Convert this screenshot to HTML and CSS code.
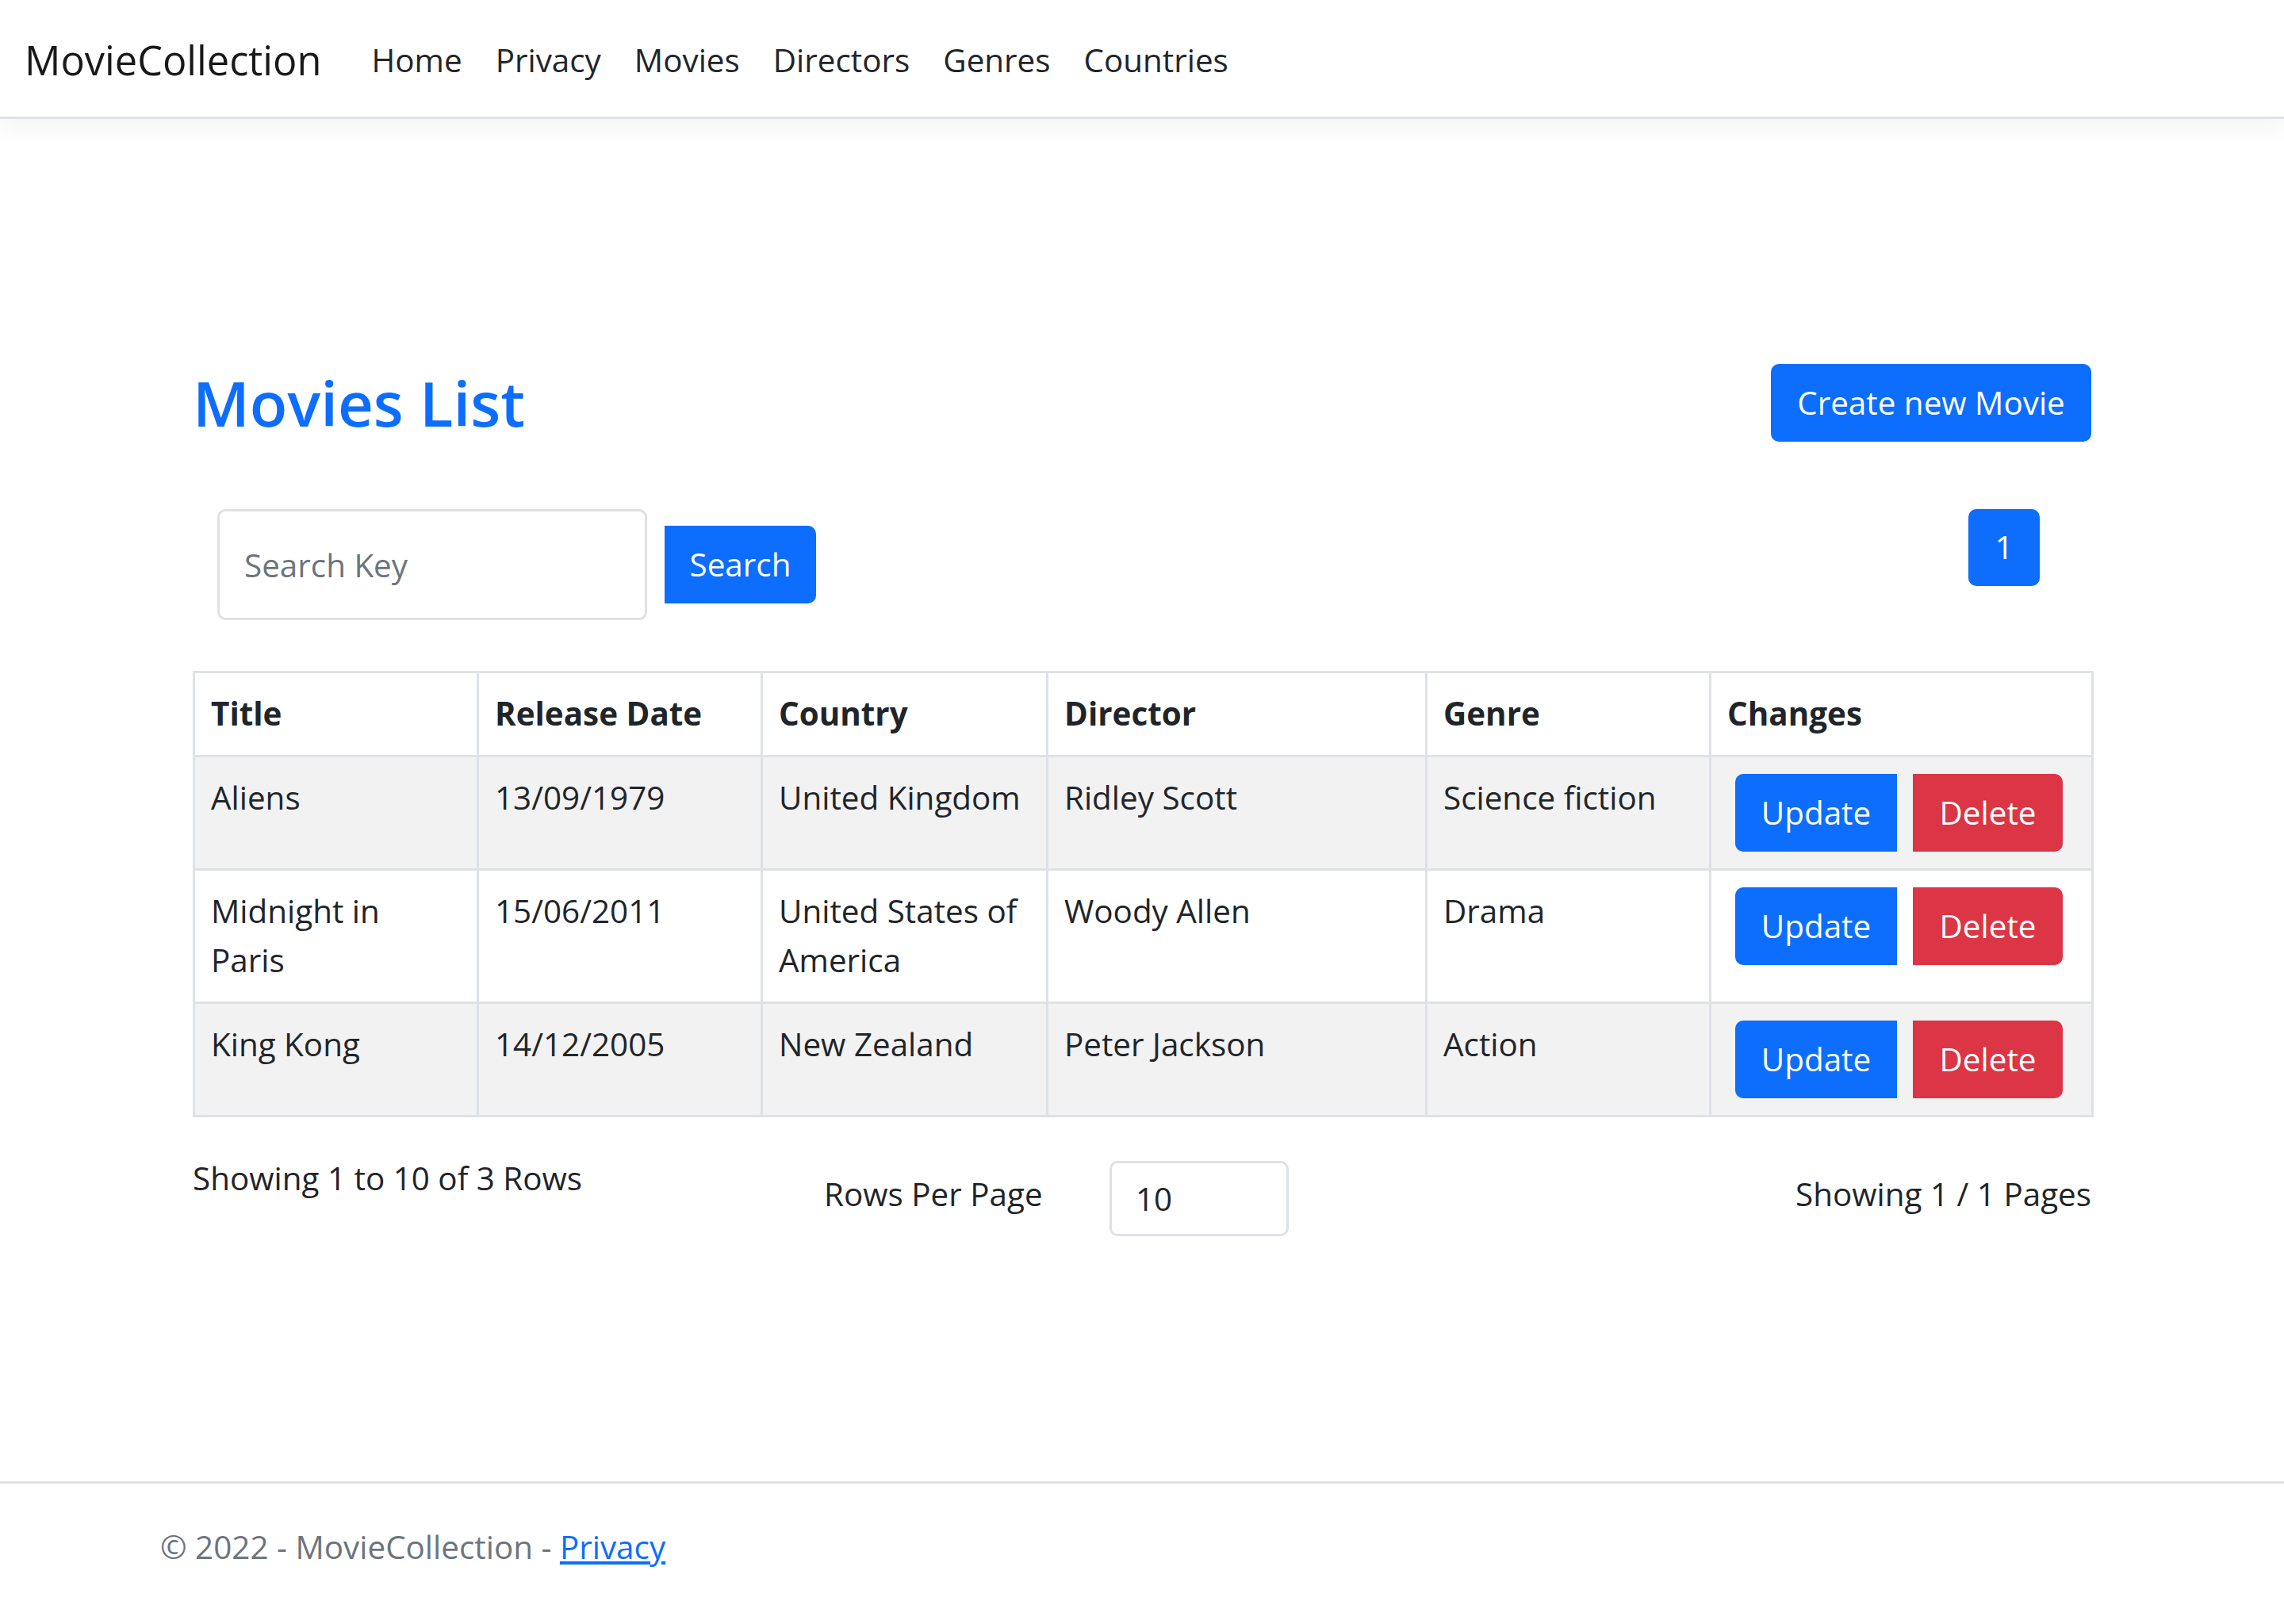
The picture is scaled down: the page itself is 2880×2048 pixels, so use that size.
FILE: index.html
```html
<!DOCTYPE html>
<html lang="en">
<head>
<meta charset="utf-8">
<title>Movies List - MovieCollection</title>
<link rel="stylesheet" href="styles.css">
</head>
<body>
<header class="site-header">
  <nav class="navbar">
    <a class="brand" href="#">MovieCollection</a>
    <ul class="nav">
      <li><a href="#">Home</a></li>
      <li><a href="#">Privacy</a></li>
      <li><a href="#">Movies</a></li>
      <li><a href="#">Directors</a></li>
      <li><a href="#">Genres</a></li>
      <li><a href="#">Countries</a></li>
    </ul>
  </nav>
</header>

<main class="main">
  <div class="title-row">
    <h2 class="page-title">Movies List</h2>
    <a class="btn btn-primary btn-create" href="#">Create new Movie</a>
  </div>

  <div class="tools-row">
    <form class="search">
      <input class="search-input" type="text" placeholder="Search Key">
      <button class="btn btn-primary btn-search" type="button">Search</button>
    </form>
    <nav class="pager">
      <a class="page-link" href="#">1</a>
    </nav>
  </div>

  <table class="movies">
    <colgroup>
      <col class="c-title">
      <col class="c-date">
      <col class="c-country">
      <col class="c-director">
      <col class="c-genre">
      <col class="c-changes">
    </colgroup>
    <thead>
      <tr>
        <th>Title</th>
        <th>Release Date</th>
        <th>Country</th>
        <th>Director</th>
        <th>Genre</th>
        <th>Changes</th>
      </tr>
    </thead>
    <tbody>
      <tr>
        <td>Aliens</td>
        <td>13/09/1979</td>
        <td>United Kingdom</td>
        <td>Ridley Scott</td>
        <td>Science fiction</td>
        <td><div class="actions"><a class="btn btn-primary btn-update" href="#">Update</a><a class="btn btn-danger btn-delete" href="#">Delete</a></div></td>
      </tr>
      <tr>
        <td>Midnight in<br>Paris</td>
        <td>15/06/2011</td>
        <td>United States of<br>America</td>
        <td>Woody Allen</td>
        <td>Drama</td>
        <td><div class="actions"><a class="btn btn-primary btn-update" href="#">Update</a><a class="btn btn-danger btn-delete" href="#">Delete</a></div></td>
      </tr>
      <tr>
        <td>King Kong</td>
        <td>14/12/2005</td>
        <td>New Zealand</td>
        <td>Peter Jackson</td>
        <td>Action</td>
        <td><div class="actions"><a class="btn btn-primary btn-update" href="#">Update</a><a class="btn btn-danger btn-delete" href="#">Delete</a></div></td>
      </tr>
    </tbody>
  </table>

  <div class="table-footer">
    <div class="rows-info">Showing 1 to 10 of 3 Rows</div>
    <div class="per-page">
      <label class="per-page-label" for="rpp">Rows Per Page</label>
      <input class="per-page-input" id="rpp" type="text" value="10">
    </div>
    <div class="pages-info">Showing 1 / 1 Pages</div>
  </div>
</main>

<footer class="site-footer">
  <div class="footer-inner">© 2022 - MovieCollection - <a href="#">Privacy</a></div>
</footer>
</body>
</html>
```

FILE: styles.css
```css
* {
  box-sizing: border-box;
}

html,
body {
  margin: 0;
  padding: 0;
}

body {
  font-family: "Open Sans", "Noto Sans", sans-serif;
  font-size: 40.4px;
  line-height: 62.4px;
  color: #212529;
  background: #fff;
  min-height: 2048px;
  display: flex;
  flex-direction: column;
}

/* ---------- header ---------- */
.site-header {
  background: #fff;
  border-bottom: 3px solid #dee2e6;
  box-shadow: 0 10px 31px rgba(0, 0, 0, 0.05);
  height: 150px;
  position: relative;
  z-index: 1;
}

.navbar {
  display: flex;
  align-items: center;
  height: 147px;
  padding: 5px 31px 0;
}

.brand {
  font-size: 50.5px;
  line-height: 78px;
  color: rgba(0, 0, 0, 0.9);
  text-decoration: none;
  margin-right: 42px;
}

.nav {
  display: flex;
  list-style: none;
  margin: 0;
  padding: 0;
}

.nav a {
  display: block;
  padding: 21px;
  color: #212529;
  text-decoration: none;
}

/* ---------- main ---------- */
.main {
  width: 2394px;
  margin: 0 auto;
  padding-top: 309px;
}

.title-row {
  display: flex;
  justify-content: space-between;
  align-items: center;
}

.page-title {
  margin: 0;
  font-size: 78px;
  line-height: 97px;
  font-weight: 600;
  color: #0d6efd;
}

.btn {
  display: inline-flex;
  align-items: center;
  justify-content: center;
  height: 98px;
  padding: 0 31px;
  border: 3px solid transparent;
  border-radius: 10px;
  font: inherit;
  color: #fff;
  text-decoration: none;
  cursor: pointer;
}

.btn-primary {
  background: #0d6efd;
  border-color: #0d6efd;
}

.btn-danger {
  background: #dc3545;
  border-color: #dc3545;
}

.btn-create {
  width: 404px;
  padding: 0;
}

.tools-row {
  display: flex;
  justify-content: space-between;
  align-items: flex-start;
  margin-top: 85px;
  padding: 0 65px 0 31px;
}

.search {
  display: flex;
  align-items: center;
  gap: 22px;
  margin: 0;
}

.search-input {
  width: 542px;
  height: 140px;
  border: 3px solid #dee2e6;
  border-radius: 10px;
  padding: 0 31px;
  font: inherit;
  color: #212529;
  background: #fff;
}

.search-input::placeholder {
  color: #6c757d;
}

.btn-search {
  width: 191px;
  padding: 0;
  border-radius: 0 10px 10px 0;
}

.pager {
  display: flex;
}

.page-link {
  display: flex;
  width: 90px;
  height: 97px;
  align-items: center;
  justify-content: center;
  background: #0d6efd;
  color: #fff;
  border-radius: 10px;
  text-decoration: none;
}

/* ---------- table ---------- */
.movies {
  width: 2394px;
  margin-top: 64px;
  border-collapse: collapse;
  table-layout: fixed;
}

.c-title { width: 358px; }
.c-date { width: 358px; }
.c-country { width: 360px; }
.c-director { width: 478px; }
.c-genre { width: 358px; }
.c-changes { width: 482px; }

.movies th,
.movies td {
  border: 3px solid #dee2e6;
  padding: 20px 20px 21px;
  line-height: 62px;
  text-align: left;
  vertical-align: top;
  white-space: nowrap;
}

.movies th {
  font-weight: 700;
}

.movies tbody tr:nth-child(odd) td {
  background: #f2f2f2;
}

.actions {
  display: flex;
  padding-top: 1px;
}

.actions .btn {
  margin: 0 10px;
  padding: 0;
}

.btn-update {
  width: 204px;
  border-radius: 10px 0 0 10px;
}

.btn-delete {
  width: 189px;
  border-radius: 0 10px 10px 0;
}

/* ---------- table footer ---------- */
.table-footer {
  display: grid;
  grid-template-columns: 796px 1fr auto;
  margin-top: 46px;
}

.per-page {
  display: flex;
  align-items: flex-start;
}

.per-page-label {
  margin-top: 20px;
  width: 360px;
}

.per-page-input {
  margin-top: 9px;
  width: 226px;
  height: 95px;
  border: 3px solid #dee2e6;
  border-radius: 10px;
  padding: 0 30px;
  font: inherit;
  color: #212529;
  background: #fff;
}

.pages-info {
  margin-top: 20px;
  text-align: right;
}

/* ---------- footer ---------- */
.site-footer {
  margin-top: auto;
  border-top: 3px solid #dee2e6;
  height: 180px;
  color: #6c757d;
}

.footer-inner {
  padding-left: 202px;
  line-height: 160px;
  white-space: nowrap;
}

.footer-inner a {
  color: #0d6efd;
  text-decoration: underline;
}
```
